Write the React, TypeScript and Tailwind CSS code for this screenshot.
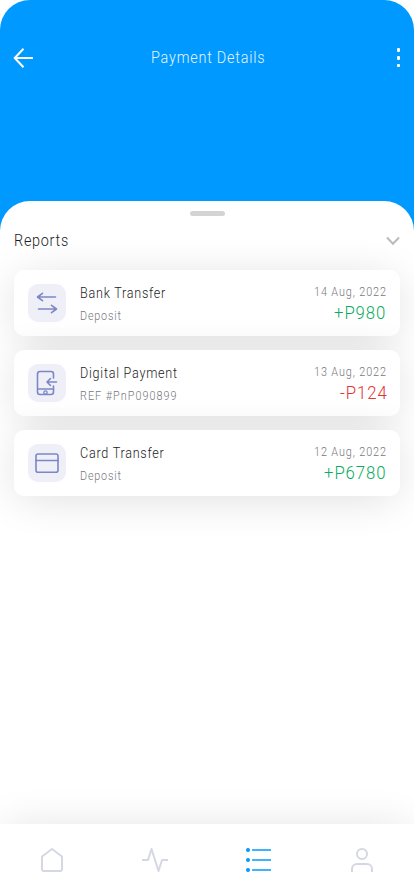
import clsx from 'clsx'

const REPORTS = [
  { icon: 'bank', title: 'Bank Transfer', titleClass: 'w-[86px]', note: 'Deposit', noteClass: 'w-[42px] tracking-[0.9px]', date: '14 Aug, 2022', amount: '+P980', amountClass: 'w-[52px]' },
  { icon: 'phone', title: 'Digital Payment', titleClass: 'w-[99px]', note: 'REF #PnP090899', noteClass: 'w-[98px] tracking-[1.14px]', date: '13 Aug, 2022', amount: '-P124', amountClass: 'w-[46px]' },
  { icon: 'card', title: 'Card Transfer', titleClass: 'w-[84px]', note: 'Deposit', noteClass: 'w-[42px] tracking-[0.9px]', date: '12 Aug, 2022', amount: '+P6780', amountClass: 'w-[62px]' },
]

function ReportIcon({ name }: { name: string }) {
  return (
    <svg width="38" height="38" viewBox="0 0 38 38" fill="none" stroke="#7c86c6" strokeWidth="1.6" strokeLinecap="round" strokeLinejoin="round">
      {name === 'bank' && <path d="M27.500 13H9.500m5-3.700L9.500 13l5 3.700M10.500 25h18M23.500 21.300l5 3.700-5 3.700" />}
      {name === 'phone' && (
        <>
          <path d="M25.500 14V10a2.500 2.500 0 0 0-2.500-2.500H12A2.500 2.500 0 0 0 9.500 10v18a2.500 2.500 0 0 0 2.500 2.500h11a2.500 2.500 0 0 0 2.500-2.500v-6M9.500 25h16" />
          <path d="M28.500 18H19m3.500-3.500L19 18l3.500 3.500" />
          <circle cx="17.500" cy="28.500" r="1.700" strokeWidth="1.300" />
        </>
      )}
      {name === 'card' && (
        <>
          <rect x="8" y="10" width="22" height="18.300" rx="2" />
          <path d="M8 16.500h22" />
        </>
      )}
    </svg>
  )
}

export default function App() {
  return (
    <div className="flex h-[896px] w-full flex-col overflow-hidden bg-white font-['Roboto',sans-serif] font-light">
      <header className="h-[231px] shrink-0 rounded-t-[30px] bg-[#0099ff] pt-[46px] text-white">
        <div className="flex h-6 items-center justify-between pl-[11px] pr-3.5">
          <svg width="24" height="24" viewBox="0 0 24 24" fill="none" stroke="currentColor" strokeWidth="2">
            <path d="M22 12H4M12.500 2.700 3.700 12l8.800 9.300" />
          </svg>
          <h1 className="mr-3.5 flex w-[115px] whitespace-nowrap text-base leading-6 opacity-90">
            <span className="origin-left scale-x-[.9] tracking-[0.88px]">Payment Details</span>
          </h1>
          <svg width="4" height="20" viewBox="0 0 4 20" fill="currentColor">
            <rect x="1" width="3" height="4" rx="1" />
            <rect x="1" y="8" width="3" height="4" rx="1" />
            <rect x="1" y="16" width="3" height="3" rx="1" />
          </svg>
        </div>
      </header>

      <main className="relative -mt-[30px] flex-1 rounded-t-[30px] bg-white px-3.5 pt-2.5">
        <div className="mx-auto h-[5px] w-[35px] rounded-full bg-[#d4d4d4]" />
        <div className="mt-[13px] flex h-6 items-center justify-between">
          <h2 className="flex w-[55px] whitespace-nowrap text-base leading-6 text-[#1c1c1c]">
            <span className="origin-left scale-x-[.9] tracking-[0.82px]">Reports</span>
          </h2>
          <svg width="14" height="10" viewBox="0 0 14 10" fill="none" stroke="#bbb" strokeWidth="2">
            <path d="m1 1.500 6 6.300 6-6.300" />
          </svg>
        </div>

        <ul className="mt-[17px] flex flex-col gap-3.5">
          {REPORTS.map((r) => (
            <li key={r.title} className="flex h-[66px] rounded-[10px] bg-white p-3.5 shadow-[0_5px_44px_-4px_rgba(0,0,0,0.14)]">
              <div className="h-[38px] w-[38px] rounded-[10px] bg-[#eff0f7]">
                <ReportIcon name={r.icon} />
              </div>
              <div className="-mt-px ml-3.5 whitespace-nowrap">
                <p className={clsx('flex text-sm leading-5 text-[#1c1c1c]', r.titleClass)}>
                  <span className="origin-left scale-x-[.9] tracking-[0.83px]">{r.title}</span>
                </p>
                <p className={clsx('mt-[5px] flex text-xs leading-4 text-[#777780]', r.noteClass)}>
                  <span className="origin-left scale-x-[.9]">{r.note}</span>
                </p>
              </div>
              <div className="ml-auto flex flex-col items-end whitespace-nowrap">
                <p className="flex w-[72px] text-xs leading-4 text-[#777780]">
                  <span className="origin-left scale-x-[.9] tracking-[1.02px]">{r.date}</span>
                </p>
                <p
                  className={clsx('mt-px flex text-lg leading-6', r.amountClass, r.amount.startsWith('-') ? 'text-[#df3434]' : 'text-[#0cac60]')}
                >
                  <span className="origin-left scale-x-[.93] tracking-[1px]">{r.amount}</span>
                </p>
              </div>
            </li>
          ))}
        </ul>
      </main>

      <nav className="relative flex h-[72px] shrink-0 items-center justify-around bg-white text-[#d5d8e2] shadow-[0_0_44px_-4px_rgba(0,0,0,0.12)]">
        <svg width="26" height="26" viewBox="0 0 26 26" fill="none" stroke="currentColor" strokeWidth="2" strokeLinejoin="round">
          <path d="m13 2 10 7.500V22a2 2 0 0 1-2 2H5a2 2 0 0 1-2-2V9.500Z" />
        </svg>
        <svg width="26" height="26" viewBox="0 0 26 26" fill="none" stroke="currentColor" strokeWidth="2" strokeLinejoin="round">
          <path d="M0 13h6L9.500 2l7 22L20 13h6" />
        </svg>
        <svg width="26" height="26" viewBox="0 0 26 26" fill="none" stroke="#40b3ff" strokeWidth="2">
          <path d="M6 3h19M6 13h19M6 23h19" />
          <g fill="#0099ff" stroke="none">
            <circle cx="2" cy="3" r="2" />
            <circle cx="2" cy="13" r="2" />
            <circle cx="2" cy="23" r="2" />
          </g>
        </svg>
        <svg width="26" height="26" viewBox="0 0 26 26" fill="none" stroke="currentColor" strokeWidth="2">
          <circle cx="13" cy="7" r="5" />
          <path d="M3 25v-3a5 5 0 0 1 5-5h10a5 5 0 0 1 5 5v3" />
        </svg>
      </nav>
    </div>
  )
}
